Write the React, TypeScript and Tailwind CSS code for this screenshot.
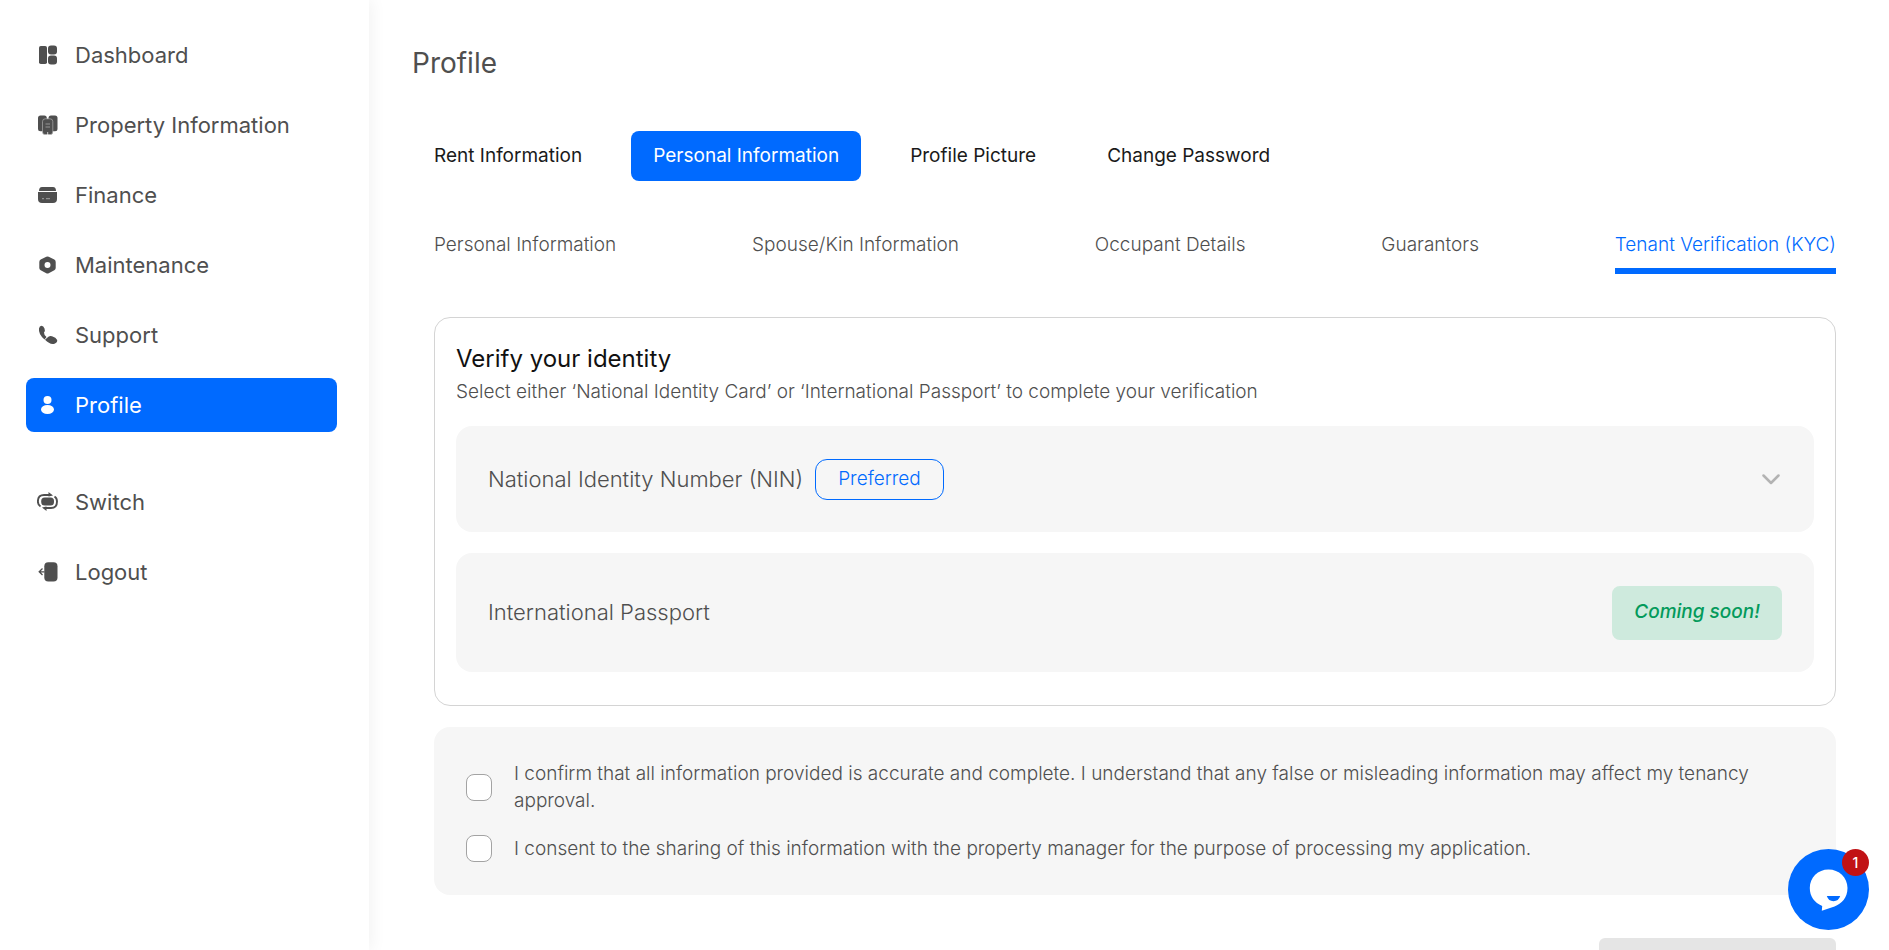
import { useState } from "react";
import type { ReactNode } from "react";

type NavItem = {
  label: string;
  icon: ReactNode;
};

const MAIN_NAV: NavItem[] = [
  {
    label: "Dashboard",
    icon: (
      <>
        <rect x="2" y="1" width="8" height="18" rx="1.8" />
        <rect x="11" y="0.500" width="9" height="9" rx="3" />
        <rect x="11" y="10.500" width="9" height="9" rx="3" />
      </>
    ),
  },
  {
    label: "Property Information",
    icon: (
      <>
        <rect x="1" y="0.500" width="8.800" height="15.800" rx="2.500" />
        <rect x="11.500" y="0.500" width="9" height="15.800" rx="2.500" />
        <path
          d="M8.300 3.800H13Q15.800 3.800 15.800 6.500V17Q15.800 19.600 13.300 19.600H8.200Q5.500 19.600 5.500 17V6.500Q5.500 3.800 8.300 3.800Z"
          stroke="#bdbdbd"
          strokeWidth="0.600"
        />
        <path d="M8.500 9H13M8.500 12H13" stroke="#b5b5b5" strokeWidth="0.700" />
        <path d="M10.700 17V20" stroke="#fff" strokeWidth="0.700" />
      </>
    ),
  },
  {
    label: "Finance",
    icon: (
      <>
        <path d="M5 2H16Q19 2 19 6H2Q2 2 5 2Z" />
        <path d="M1 7H20V14Q20 18 16 18H5Q1 18 1 14Z" />
        <path d="M5 13.700H7M9 13.700H13" stroke="#b5b5b5" strokeWidth="0.800" />
      </>
    ),
  },
  {
    label: "Maintenance",
    icon: (
      <path
        fillRule="evenodd"
        d="M9.300 1.800Q10.500 1 11.700 1.800L17.300 4.600Q18.700 5.400 18.700 7V13Q18.700 14.500 17.300 15.300L11.700 18.200Q10.500 19 9.300 18.200L3.700 15.300Q2.300 14.500 2.300 13V7Q2.300 5.400 3.700 4.600ZM10.500 7A3 3 0 1 0 10.500 13A3 3 0 1 0 10.500 7Z"
      />
    ),
  },
  {
    label: "Support",
    icon: (
      <>
        <path d="M2 3.500Q2.500 1 4.500 0.800Q6.500 0.800 7.500 3.500Q8.500 6 7 7.500Q6.800 9.500 9.500 12L7.500 14.500Q1.200 9 2 3.500Z" />
        <path d="M8 14.800L10.500 12.600Q12 10.500 15 11.300Q19 12.500 20.200 15Q20.500 17.500 17.500 18.700Q13 20 8 14.800Z" />
      </>
    ),
  },
  {
    label: "Profile",
    icon: (
      <>
        <circle cx="10.500" cy="5" r="4" />
        <ellipse cx="10.500" cy="14.500" rx="6.500" ry="4.500" />
      </>
    ),
  },
];

const ACCOUNT_NAV: NavItem[] = [
  {
    label: "Switch",
    icon: (
      <>
        <rect x="4.200" y="5.500" width="12.800" height="8" rx="3.500" />
        <path
          d="M3.500 14.500Q0.900 13 0.900 9.500Q0.900 3 7 3H14M17.500 4.500Q20 6 20 9.500Q20 16 14 16H7"
          fill="none"
          stroke="currentColor"
          strokeWidth="1.900"
        />
        <path d="M11.500 0L16 3.500L11.500 4.500ZM9.500 19L5 15.500L9.500 14.500Z" />
      </>
    ),
  },
  {
    label: "Logout",
    icon: (
      <>
        <rect x="7.300" y="0.300" width="13.200" height="19.200" rx="4" />
        <path
          d="M7.500 9.800H2.500M5.500 6.500L2.200 9.800L5.500 13"
          fill="none"
          stroke="currentColor"
          strokeWidth="1.300"
        />
      </>
    ),
  },
];

const TABS = ["Rent Information", "Personal Information", "Profile Picture", "Change Password"];

const SECTIONS = [
  "Personal Information",
  "Spouse/Kin Information",
  "Occupant Details",
  "Guarantors",
  "Tenant Verification (KYC)",
];

const CONSENTS = [
  "I confirm that all information provided is accurate and complete. I understand that any false or misleading information may affect my tenancy approval.",
  "I consent to the sharing of this information with the property manager for the purpose of processing my application.",
];

function NavLink({ item, active }: { item: NavItem; active?: boolean }) {
  return (
    <a
      href="#"
      className={
        active
          ? "flex h-[54px] items-center gap-[17px] rounded-lg bg-[#006aff] pr-4 pl-[11px] text-[22px] text-white"
          : "flex h-[54px] items-center gap-[17px] rounded-lg pr-4 pl-[11px] text-[22px] text-[#4f4f4f]"
      }
    >
      <svg viewBox="0 0 21 20" className="h-5 w-[21px] shrink-0" fill="currentColor" aria-hidden="true">
        {item.icon}
      </svg>
      <span className="whitespace-nowrap">{item.label}</span>
    </a>
  );
}

function Sidebar() {
  return (
    <aside className="w-[369px] shrink-0 pt-7 pr-8 pl-[26px] shadow-[2px_0_16px_rgba(0,0,0,0.06)]">
      <nav>
        <div className="flex flex-col gap-4">
          {MAIN_NAV.map((item) => (
            <NavLink key={item.label} item={item} active={item.label === "Profile"} />
          ))}
        </div>
        <div className="mt-[43px] flex flex-col gap-4">
          {ACCOUNT_NAV.map((item) => (
            <NavLink key={item.label} item={item} />
          ))}
        </div>
      </nav>
    </aside>
  );
}

function ChatButton() {
  return (
    <button type="button" aria-label="Chat" className="fixed right-5 bottom-5 size-[81px] rounded-full bg-[#006aff]">
      <svg viewBox="0 0 81 81" className="size-full" aria-hidden="true">
        <path
          d="M40.500 20.500C51 20.500 59.500 28.500 59.500 39C59.500 49 53.500 54.500 46.500 57.500L33.800 61.800L34.200 57C26.500 53.500 21.800 47.500 21.800 39C21.800 28.500 30 20.500 40.500 20.500Z"
          fill="#fff"
        />
        <path d="M38.800 47H52.200Q50.500 52.200 45.500 52.200Q40.500 52.200 38.800 47Z" fill="#006aff" />
      </svg>
      <span className="absolute top-0 right-0 flex size-[27px] items-center justify-center rounded-full bg-[#c11215] text-sm font-medium text-white">
        1
      </span>
    </button>
  );
}

export default function App() {
  const [tab, setTab] = useState("Personal Information");
  const [section, setSection] = useState("Tenant Verification (KYC)");

  return (
    <div className="flex h-screen overflow-hidden bg-white font-['Inter',sans-serif] text-[#4f4f4f]">
      <Sidebar />
      <main className="min-w-0 flex-1 overflow-y-auto pt-11 pr-[53px] pb-10 pl-[43px] [scrollbar-width:none]">
        <h1 className="text-[28px] leading-[38px]">Profile</h1>

        <div className="mt-[49px] flex gap-[27px]">
          {TABS.map((t) => (
            <button
              key={t}
              type="button"
              onClick={() => setTab(t)}
              className={
                t === tab
                  ? "h-[50px] rounded-lg bg-[#006aff] px-[22px] text-[19px] whitespace-nowrap text-white"
                  : "h-[50px] rounded-lg px-[22px] text-[19px] whitespace-nowrap text-[#1a1a1a]"
              }
            >
              {t}
            </button>
          ))}
        </div>

        <div className="pl-[22px]">
          <div className="mt-[51px] flex justify-between">
            {SECTIONS.map((s) => (
              <button
                key={s}
                type="button"
                onClick={() => setSection(s)}
                className={
                  s === section
                    ? "border-b-6 border-[#006aff] pb-2.5 text-[19px] leading-[26px] font-light whitespace-nowrap text-[#006aff]"
                    : "border-b-6 border-transparent pb-2.5 text-[19px] leading-[26px] font-light whitespace-nowrap"
                }
              >
                {s}
              </button>
            ))}
          </div>

          <section className="mt-[43px] rounded-2xl border border-[#d4d4d4] px-[21px] pt-6 pb-[33px]">
            <h2 className="text-2xl leading-[34px] text-[#111111]">Verify your identity</h2>
            <p className="text-[19px] leading-8 font-light">
              Select either ‘National Identity Card’ or ‘International Passport’ to complete your verification
            </p>

            <button
              type="button"
              aria-expanded="false"
              className="mt-[18px] flex h-[106px] w-full items-center gap-3 rounded-2xl bg-[#f6f6f6] px-8 text-left"
            >
              <span className="text-[22px] font-light">National Identity Number (NIN)</span>
              <span className="flex h-[41px] items-center rounded-xl border border-[#006aff] px-[22px] text-[19px] font-light text-[#006aff]">
                Preferred
              </span>
              <svg viewBox="0 0 22 22" className="ml-auto size-[22px]" fill="none" aria-hidden="true">
                <path d="M3.500 7.500L11 15L18.500 7.500" stroke="#b3b3b3" strokeWidth="2.500" strokeLinecap="round" strokeLinejoin="round" />
              </svg>
            </button>

            <div className="mt-[21px] flex h-[119px] items-center justify-between rounded-2xl bg-[#f6f6f6] px-8">
              <span className="text-[22px] font-light">International Passport</span>
              <span className="flex h-[54px] items-center rounded-lg bg-[#ceeadd] px-[22px] text-[19px] font-medium text-[#049a5b] italic">
                Coming soon!
              </span>
            </div>
          </section>

          <section className="mt-[21px] flex flex-col gap-[21px] rounded-2xl bg-[#f6f6f6] px-8 py-[33px]">
            {CONSENTS.map((text) => (
              <label key={text} className="flex items-center gap-[22px] text-[19px] leading-[27px] font-light">
                <input
                  type="checkbox"
                  className="h-[27px] w-[26px] shrink-0 appearance-none rounded-lg border border-[#a3a3a3] bg-white checked:bg-[#006aff]"
                />
                <span>{text}</span>
              </label>
            ))}
          </section>

          <div className="mt-[43px] flex justify-end">
            <button type="button" disabled aria-label="Submit" className="h-[54px] w-[237px] rounded-md bg-[#e5e5e5]" />
          </div>
        </div>
      </main>
      <ChatButton />
    </div>
  );
}
